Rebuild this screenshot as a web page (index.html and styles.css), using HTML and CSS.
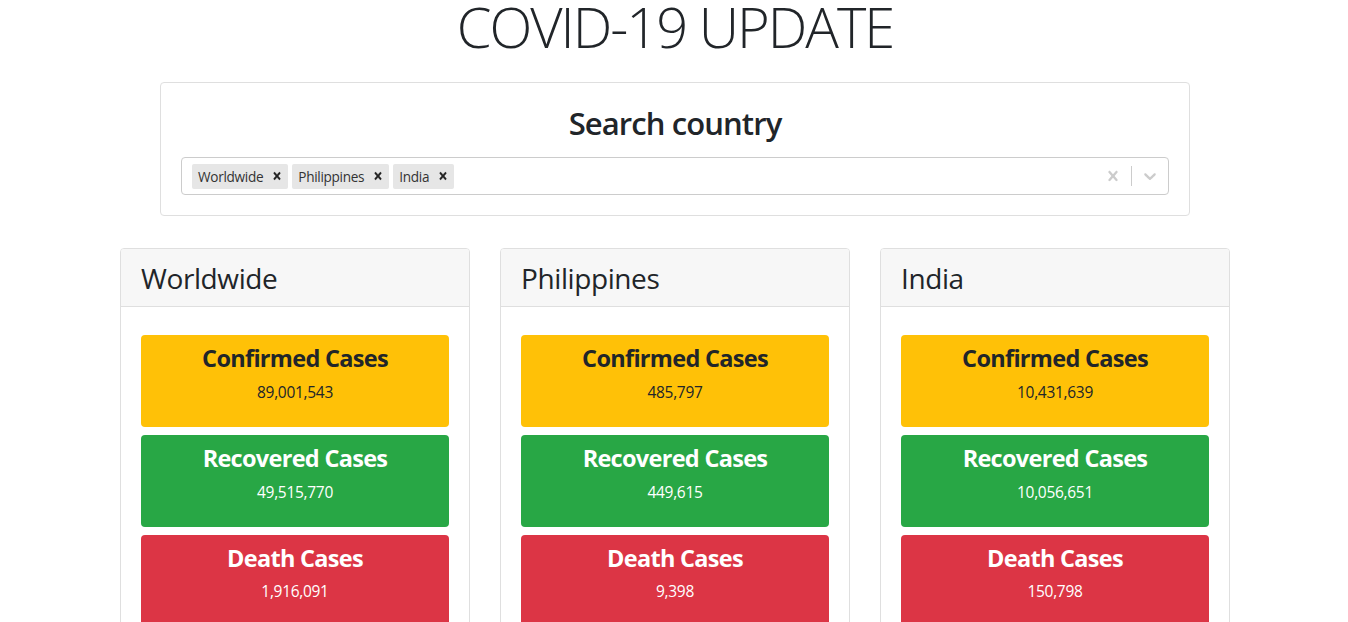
FILE: index.html
```html
<!DOCTYPE html>
<html lang="en">
<head>
<meta charset="utf-8">
<title>COVID-19 UPDATE</title>
<link rel="stylesheet" href="styles.css">
</head>
<body>
<div class="container">
  <h1 class="title">COVID-19 UPDATE</h1>
  <div class="search-card">
    <h2 class="search-title">Search country</h2>
    <div class="select">
      <div class="values">
        <div class="chip"><span class="chip-label">Worldwide</span><span class="chip-remove"><svg viewBox="0 0 20 20" width="14" height="14"><path d="M14.348 14.849c-0.469 0.469-1.229 0.469-1.697 0l-2.651-3.030-2.651 3.029c-0.469 0.469-1.229 0.469-1.697 0-0.469-0.469-0.469-1.229 0-1.697l2.758-3.15-2.759-3.152c-0.469-0.469-0.469-1.228 0-1.697s1.228-0.469 1.697 0l2.652 3.031 2.651-3.031c0.469-0.469 1.228-0.469 1.697 0s0.469 1.229 0 1.697l-2.758 3.152 2.758 3.15c0.469 0.469 0.469 1.229 0 1.698z"/></svg></span></div>
        <div class="chip"><span class="chip-label">Philippines</span><span class="chip-remove"><svg viewBox="0 0 20 20" width="14" height="14"><path d="M14.348 14.849c-0.469 0.469-1.229 0.469-1.697 0l-2.651-3.030-2.651 3.029c-0.469 0.469-1.229 0.469-1.697 0-0.469-0.469-0.469-1.229 0-1.697l2.758-3.15-2.759-3.152c-0.469-0.469-0.469-1.228 0-1.697s1.228-0.469 1.697 0l2.652 3.031 2.651-3.031c0.469-0.469 1.228-0.469 1.697 0s0.469 1.229 0 1.697l-2.758 3.152 2.758 3.15c0.469 0.469 0.469 1.229 0 1.698z"/></svg></span></div>
        <div class="chip"><span class="chip-label">India</span><span class="chip-remove"><svg viewBox="0 0 20 20" width="14" height="14"><path d="M14.348 14.849c-0.469 0.469-1.229 0.469-1.697 0l-2.651-3.030-2.651 3.029c-0.469 0.469-1.229 0.469-1.697 0-0.469-0.469-0.469-1.229 0-1.697l2.758-3.15-2.759-3.152c-0.469-0.469-0.469-1.228 0-1.697s1.228-0.469 1.697 0l2.652 3.031 2.651-3.031c0.469-0.469 1.228-0.469 1.697 0s0.469 1.229 0 1.697l-2.758 3.152 2.758 3.15c0.469 0.469 0.469 1.229 0 1.698z"/></svg></span></div>
      </div>
      <div class="indicators">
        <span class="indicator"><svg viewBox="0 0 20 20" width="20" height="20"><path d="M14.348 14.849c-0.469 0.469-1.229 0.469-1.697 0l-2.651-3.030-2.651 3.029c-0.469 0.469-1.229 0.469-1.697 0-0.469-0.469-0.469-1.229 0-1.697l2.758-3.15-2.759-3.152c-0.469-0.469-0.469-1.228 0-1.697s1.228-0.469 1.697 0l2.652 3.031 2.651-3.031c0.469-0.469 1.228-0.469 1.697 0s0.469 1.229 0 1.697l-2.758 3.152 2.758 3.15c0.469 0.469 0.469 1.229 0 1.698z"/></svg></span>
        <span class="separator"></span>
        <span class="indicator"><svg viewBox="0 0 20 20" width="20" height="20"><path d="M4.516 7.548c0.436-0.446 1.043-0.481 1.576 0l3.908 3.747 3.908-3.747c0.533-0.481 1.141-0.446 1.574 0 0.436 0.445 0.408 1.197 0 1.615-0.406 0.418-4.695 4.502-4.695 4.502-0.217 0.223-0.502 0.335-0.787 0.335s-0.57-0.112-0.789-0.335c0 0-4.287-4.084-4.695-4.502s-0.436-1.170 0-1.615z"/></svg></span>
      </div>
    </div>
  </div>

  <div class="grid">
    <div class="country-card">
      <div class="country-header"><h3>Worldwide</h3></div>
      <div class="country-body">
        <div class="stat stat-confirmed"><h4>Confirmed Cases</h4><p>89,001,543</p></div>
        <div class="stat stat-recovered"><h4>Recovered Cases</h4><p>49,515,770</p></div>
        <div class="stat stat-death"><h4>Death Cases</h4><p>1,916,091</p></div>
      </div>
    </div>
    <div class="country-card">
      <div class="country-header"><h3>Philippines</h3></div>
      <div class="country-body">
        <div class="stat stat-confirmed"><h4>Confirmed Cases</h4><p>485,797</p></div>
        <div class="stat stat-recovered"><h4>Recovered Cases</h4><p>449,615</p></div>
        <div class="stat stat-death"><h4>Death Cases</h4><p>9,398</p></div>
      </div>
    </div>
    <div class="country-card">
      <div class="country-header"><h3>India</h3></div>
      <div class="country-body">
        <div class="stat stat-confirmed"><h4>Confirmed Cases</h4><p>10,431,639</p></div>
        <div class="stat stat-recovered"><h4>Recovered Cases</h4><p>10,056,651</p></div>
        <div class="stat stat-death"><h4>Death Cases</h4><p>150,798</p></div>
      </div>
    </div>
  </div>
</div>
</body>
</html>
```

FILE: styles.css
```css
* { box-sizing: border-box; }
html, body { margin: 0; padding: 0; background: #fff; }
body {
  font-family: "Open Sans", "Noto Sans", sans-serif;
  color: #212529;
  font-size: 16px;
  line-height: 1.5;
}
.container {
  width: 1110px;
  margin-left: calc(50% - 554px);
}
.title {
  margin: 0;
  text-align: center;
  font-size: 56px;
  font-weight: 300;
  letter-spacing: -2px;
  line-height: 52px;
  height: 52px;
}
.search-card {
  margin: 30px 40px 0;
  border: 1px solid #dfdfdf;
  border-radius: 4px;
  padding: 20px;
}
.search-title {
  margin: 0 0 16px;
  text-align: center;
  font-size: 31px;
  font-weight: 600;
  letter-spacing: -0.9px;
  line-height: 38px;
  padding-top: 1px;
  height: 38px;
}
.select {
  display: flex;
  align-items: center;
  min-height: 38px;
  border: 1px solid #ccc;
  border-radius: 4px;
}
.values {
  flex: 1;
  display: flex;
  align-items: center;
  padding: 2px 8px;
}
.chip {
  display: flex;
  background: #e6e6e6;
  border-radius: 2px;
  margin: 2px;
}
.chip-label {
  font-size: 13.6px;
  letter-spacing: -0.3px;
  line-height: 19px;
  padding: 3px 3px 3px 6px;
  color: #333;
}
.chip-remove {
  display: flex;
  align-items: center;
  padding: 0 4px;
  border-radius: 2px;
}
.chip-remove svg { fill: #222; stroke: #222; stroke-width: 0.6; display: block; }
.indicators {
  display: flex;
  align-items: stretch;
  align-self: stretch;
}
.indicator {
  display: flex;
  align-items: center;
  padding: 8px;
}
.indicator svg { fill: #ccc; display: block; }
.separator {
  width: 1px;
  background: #ccc;
  margin: 8px 0;
}
.grid {
  display: grid;
  grid-template-columns: repeat(3, 350px);
  column-gap: 30px;
  margin-top: 32px;
}
.country-card {
  border: 1px solid #dfdfdf;
  border-radius: 4px;
}
.country-header {
  background: #f7f7f7;
  border-bottom: 1px solid #dfdfdf;
  padding: 13px 20px 11px;
  border-radius: 3px 3px 0 0;
}
.country-header h3 {
  margin: 0;
  font-size: 28px;
  font-weight: 500;
  letter-spacing: -0.4px;
  line-height: 33px;
}
.country-body {
  padding: 28px 20px 20px;
}
.stat {
  border-radius: 4px;
  padding: 8px;
  margin-bottom: 8px;
  text-align: center;
}
.stat h4 {
  margin: 0 0 7px;
  font-size: 23.5px;
  font-weight: 700;
  letter-spacing: -0.7px;
  line-height: 28.8px;
  padding-top: 1px;
}
.stat p {
  margin: 0 0 15px;
  font-size: 15.5px;
  letter-spacing: -0.3px;
  line-height: 24px;
}
.stat-confirmed { background: #ffc107; color: #212529; }
.stat-recovered { background: #28a745; color: #fff; }
.stat-death { background: #dc3545; color: #fff; }
```
